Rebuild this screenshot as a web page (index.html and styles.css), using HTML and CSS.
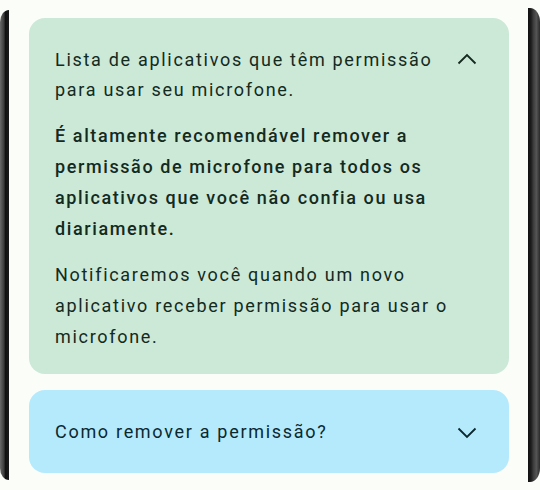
FILE: index.html
```html
<!DOCTYPE html>
<html lang="pt-BR">
<head>
    <meta charset="UTF-8">
    <meta name="viewport" content="width=device-width, initial-scale=1.0">
    <title>Permissão do microfone</title>
    <link rel="stylesheet" href="styles.css">
</head>
<body>

<div class="device">
    <div class="edge edge-left"></div>

    <div class="screen">
        <!-- Card aberto -->
        <div class="card card-green">
            <div class="card-header">
                <p class="card-title">Lista de aplicativos que têm permissão para usar seu microfone.</p>
                <svg class="chevron" viewBox="0 0 24 24" width="24" height="24">
                    <path d="M3.5 15.5L12 7l8.5 8.5" fill="none" stroke="currentColor" stroke-width="1.8"/>
                </svg>
            </div>
            <p class="card-text strong">É altamente recomendável remover a permissão de microfone para todos os aplicativos que você não confia ou usa diariamente.</p>
            <p class="card-text">Notificaremos você quando um novo aplicativo receber permissão para usar o microfone.</p>
        </div>

        <!-- Card fechado -->
        <div class="card card-blue">
            <div class="card-header">
                <p class="card-title">Como remover a permissão?</p>
                <svg class="chevron" viewBox="0 0 24 24" width="24" height="24">
                    <path d="M3.5 8.5L12 17l8.5-8.5" fill="none" stroke="currentColor" stroke-width="1.8"/>
                </svg>
            </div>
        </div>
    </div>

    <div class="edge edge-right"></div>
</div>

</body>
</html>
```

FILE: styles.css
```css
body {
    margin: 0;
    background-color: #fbfdf8;
    font-family: 'Roboto', 'Noto Sans', sans-serif;
}

.device {
    display: flex;
    height: 490px;
}

.edge {
    flex: none;
    margin: 10px 0;
}

.edge-left {
    width: 9px;
    background: linear-gradient(to right, #6a6a6a, #3a3a3a 45%, #111 60%, #1a1a1a);
    border-radius: 9px 0 0 9px / 12px 0 0 12px;
}

.edge-right {
    width: 12px;
    margin: 8px 0;
    background: linear-gradient(to right, #111, #1c1c1c 25%, #3c3c3c 45%, #555 70%, #2a2a2a);
    border-radius: 0 10px 10px 0 / 0 14px 14px 0;
}

.screen {
    flex: 1;
    padding: 18px 19px 0 20px;
    display: flex;
    flex-direction: column;
    gap: 16px;
}

.card {
    border-radius: 16px;
    padding: 27px 26px 22px 26px;
}

.card-green {
    background-color: #cce8d7;
    color: #132a1e;
}

.card-blue {
    background-color: #b5eafc;
    color: #0b2830;
    padding-top: 27px;
    padding-bottom: 26px;
}

.card-header {
    display: flex;
    align-items: flex-start;
    justify-content: space-between;
}

.card-title {
    margin: 0;
    width: 390px;
    font-size: 18px;
    line-height: 30px;
    letter-spacing: 1.7px;
}

.chevron {
    flex: none;
    margin-top: 3px;
    margin-right: 4px;
}

.card-text {
    margin: 15px 0 0 0;
    font-size: 18px;
    line-height: 31px;
    letter-spacing: 1.7px;
}

.strong {
    font-weight: 500;
    letter-spacing: 1.6px;
}
```
